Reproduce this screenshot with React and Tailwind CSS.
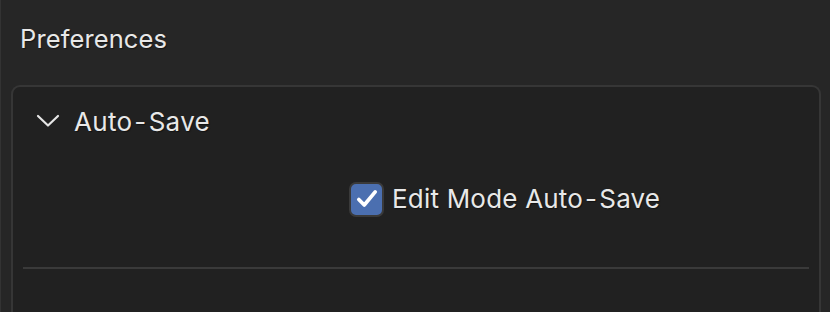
export default function App() {
  const shadow = { textShadow: "1px 1px 1px rgba(0,0,0,0.45)" };
  return (
    <div className="w-[830px] h-[312px] overflow-hidden bg-[#262626] border-l border-[#333333] font-['Inter',sans-serif] text-[#e8e8e8]">
      <div className="pl-[19px] pt-[21px] h-[85px]">
        <div className="text-[25.5px] leading-[36px] tracking-[0.1px]" style={shadow}>Preferences</div>
      </div>
      <div className="ml-[10px] mr-[9px] h-[240px] rounded-t-[9px] border-[2px] border-b-0 border-[#363636] bg-[#212121]">
        <div className="flex items-center h-[70px] pl-[22px]">
          <svg width="26" height="18" viewBox="0 0 26 18" className="mr-[13px] mt-[-2px]">
            <path d="M3 4 L13 13.5 L23 4" fill="none" stroke="#e6e6e6" strokeWidth="2.2" strokeLinecap="round" strokeLinejoin="round" />
          </svg>
          <span className="text-[26px] leading-[30px] tracking-[0.3px]" style={shadow}>Auto<span className="mx-[2px]">-</span>Save</span>
        </div>
        <div className="flex items-center h-[76px] pl-[336px] pt-[8px]">
          <div className="w-[35px] h-[35px] rounded-[7px] border-[2px] border-[#3a3a3a] bg-[#4b6fb0] flex items-center justify-center">
            <svg width="24" height="24" viewBox="0 0 22 22">
              <path d="M3.5 11.5 L8.5 16.5 L18.5 4.5" fill="none" stroke="#ffffff" strokeWidth="3.4" strokeLinecap="round" strokeLinejoin="round" />
            </svg>
          </div>
          <span className="ml-[8px] text-[26px] leading-[30px] tracking-[0.2px]" style={shadow}>Edit Mode Auto<span className="mx-[2px]">-</span>Save</span>
        </div>
        <div className="pt-[34px] px-[10px]">
          <div className="h-[2px] bg-[#3a3a3a]" />
        </div>
      </div>
    </div>
  );
}
